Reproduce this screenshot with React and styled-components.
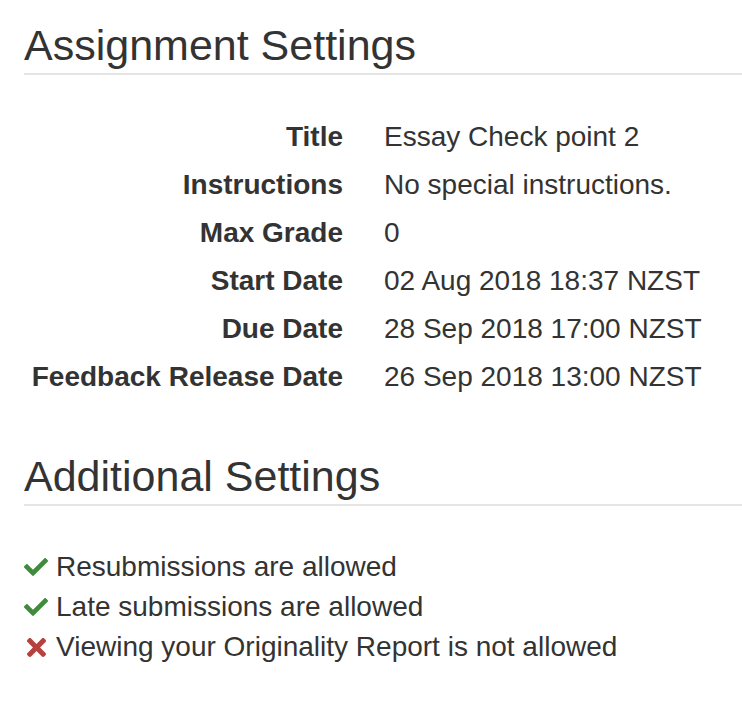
import React from "react";
import styled, { createGlobalStyle } from "styled-components";

const GlobalStyle = createGlobalStyle`
  html, body {
    margin: 0;
    padding: 0;
    background: #fff;
  }
  body {
    font-family: "Liberation Sans", Arial, sans-serif;
    color: #333;
  }
`;

const settings = [
  { label: "Title", value: "Essay Check point 2" },
  { label: "Instructions", value: "No special instructions." },
  { label: "Max Grade", value: "0" },
  { label: "Start Date", value: "02 Aug 2018 18:37 NZST" },
  { label: "Due Date", value: "28 Sep 2018 17:00 NZST" },
  { label: "Feedback Release Date", value: "26 Sep 2018 13:00 NZST" },
];

const extras = [
  { ok: true, text: "Resubmissions are allowed" },
  { ok: true, text: "Late submissions are allowed" },
  { ok: false, text: "Viewing your Originality Report is not allowed" },
];

const CheckIcon = () => (
  <svg width="24" height="24" viewBox="0 0 512 512" aria-hidden="true">
    <path
      fill="currentColor"
      d="M173.898 439.404l-166.4-166.4c-9.997-9.997-9.997-26.206 0-36.204l36.203-36.204c9.997-9.998 26.207-9.998 36.204 0L192 312.69 432.095 72.596c9.997-9.997 26.207-9.997 36.204 0l36.203 36.204c9.997 9.997 9.997 26.206 0 36.204l-294.4 294.401c-9.998 9.997-26.207 9.997-36.204-.001z"
    />
  </svg>
);

const CrossIcon = () => (
  <svg width="19" height="19" viewBox="0 80 352 352" aria-hidden="true">
    <path
      fill="currentColor"
      d="M242.72 256l100.07-100.07c12.28-12.28 12.28-32.19 0-44.48l-22.24-22.24c-12.28-12.28-32.19-12.28-44.48 0L176 189.28 75.930 89.21c-12.28-12.28-32.19-12.28-44.48 0L9.21 111.45c-12.28 12.28-12.28 32.19 0 44.48L109.28 256 9.21 356.07c-12.28 12.28-12.28 32.19 0 44.48l22.24 22.24c12.28 12.28 32.2 12.28 44.48 0L176 322.72l100.07 100.07c12.28 12.28 32.2 12.28 44.48 0l22.24-22.24c12.28-12.28 12.28-32.19 0-44.48L242.72 256z"
    />
  </svg>
);

const App = () => {
  return (
    <Page>
      <GlobalStyle />
      <Section>
        <Heading>Assignment Settings</Heading>
        <DetailList>
          {settings.map((s) => (
            <React.Fragment key={s.label}>
              <Term>{s.label}</Term>
              <Detail>{s.value}</Detail>
            </React.Fragment>
          ))}
        </DetailList>
      </Section>
      <Section>
        <Heading>Additional Settings</Heading>
        <FlagList>
          {extras.map((e) => (
            <Flag key={e.text}>
              <FlagIcon $ok={e.ok}>{e.ok ? <CheckIcon /> : <CrossIcon />}</FlagIcon>
              {e.text}
            </Flag>
          ))}
        </FlagList>
      </Section>
    </Page>
  );
};

export default App;

const Page = styled.div`
  padding: 22px 0 40px 24px;
  width: 718px;
`;

const Section = styled.section`
  & + & {
    margin-top: 62px;
  }
`;

const Heading = styled.h2`
  margin: 0;
  padding-bottom: 5px;
  border-bottom: 2px solid #e5e5e5;
  font-size: 43px;
  font-weight: 400;
  line-height: 46px;
  color: #333;
`;

const DetailList = styled.dl`
  display: grid;
  grid-template-columns: 319px 1fr;
  column-gap: 41px;
  row-gap: 20px;
  margin: 48px 0 0;
  font-size: 28px;
  line-height: 28px;
`;

const Term = styled.dt`
  text-align: right;
  font-weight: 700;
  white-space: nowrap;
`;

const Detail = styled.dd`
  margin: 0;
  white-space: nowrap;
`;

const FlagList = styled.ul`
  list-style: none;
  margin: 47px 0 0;
  padding: 0;
  display: flex;
  flex-direction: column;
  gap: 12px;
  font-size: 28px;
  line-height: 28px;
`;

const Flag = styled.li`
  display: flex;
  align-items: center;
  gap: 8px;
`;

const FlagIcon = styled.span`
  display: inline-flex;
  justify-content: center;
  width: 24px;
  color: ${(p) => (p.$ok ? "#3f8a3d" : "#b5423e")};
`;
